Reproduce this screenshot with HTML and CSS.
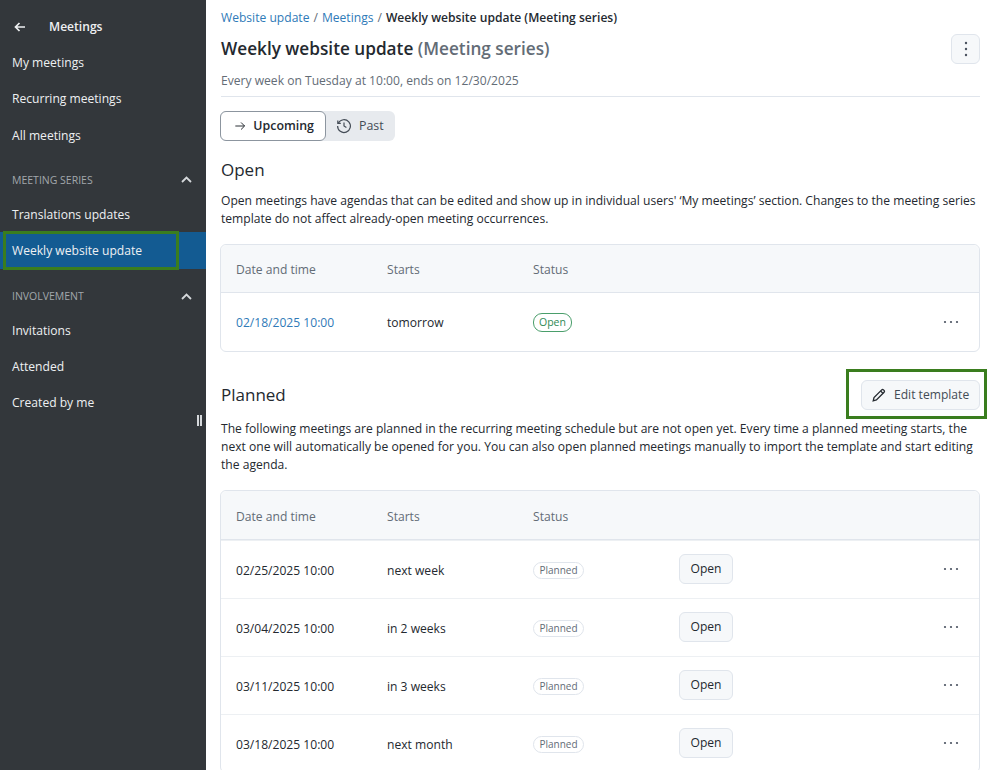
FILE: index.html
```html
<!DOCTYPE html>
<html lang="en">
  <head>
    <meta charset="UTF-8" />
    <title>Weekly website update (Meeting series)</title>
    <link rel="stylesheet" href="styles.css">
  </head>
  <body>
    <aside class="sidebar">
      <div class="sidebar__title">
        <svg class="sidebar__back" width="12" height="12" viewBox="0 0 12 12"><path d="M11 6H2M5.5 2 1.5 6l4 4" fill="none" stroke="currentColor" stroke-width="1.7"/></svg>
        <span>Meetings</span>
      </div>
      <a class="sidebar__item">My meetings</a>
      <a class="sidebar__item">Recurring meetings</a>
      <a class="sidebar__item">All meetings</a>

      <div class="sidebar__group">
        <span>MEETING SERIES</span>
        <svg width="11" height="7" viewBox="0 0 11 7"><path d="M1 6 5.5 1.5 10 6" fill="none" stroke="currentColor" stroke-width="1.8"/></svg>
      </div>
      <a class="sidebar__item">Translations updates</a>
      <a class="sidebar__item sidebar__item--active">Weekly website update<span class="highlight highlight--nav"></span></a>

      <div class="sidebar__group sidebar__group--second">
        <span>INVOLVEMENT</span>
        <svg width="11" height="7" viewBox="0 0 11 7"><path d="M1 6 5.5 1.5 10 6" fill="none" stroke="currentColor" stroke-width="1.8"/></svg>
      </div>
      <a class="sidebar__item">Invitations</a>
      <a class="sidebar__item">Attended</a>
      <a class="sidebar__item">Created by me</a>
      <span class="sidebar__handle"></span>
    </aside>

    <main class="content">
      <nav class="breadcrumb">
        <a>Website update</a><span class="breadcrumb__sep">/</span><a>Meetings</a><span class="breadcrumb__sep">/</span><strong>Weekly website update (Meeting series)</strong>
      </nav>

      <header class="page-head">
        <h1>Weekly website update <span>(Meeting series)</span></h1>
        <button class="btn-kebab">
          <svg width="4" height="16" viewBox="0 0 4 16"><circle cx="2" cy="2" r="1.2"/><circle cx="2" cy="8" r="1.2"/><circle cx="2" cy="14" r="1.2"/></svg>
        </button>
      </header>
      <p class="page-sub">Every week on Tuesday at 10:00, ends on 12/30/2025</p>

      <div class="tabs">
        <button class="tab tab--selected">
          <svg width="14" height="12" viewBox="0 0 14 12"><path d="M1.5 6h10.5M8 2l4 4-4 4" fill="none" stroke="currentColor" stroke-width="1.1"/></svg>
          Upcoming
        </button>
        <button class="tab">
          <svg width="16" height="16" viewBox="0 0 16 16" fill="none" stroke="currentColor" stroke-width="1.2"><path d="M2.3 5.2A6.4 6.4 0 1 1 1.6 8"/><path d="M1.8 2.4v3h3"/><path d="M8 4.6V8l2.4 1.5"/></svg>
          Past
        </button>
      </div>

      <h2 class="section-title section-title--open">Open</h2>
      <p class="section-text">Open meetings have agendas that can be edited and show up in individual users' ‘My meetings’ section. Changes to the meeting series template do not affect already-open meeting occurrences.</p>

      <section class="table table--open">
        <div class="table__row table__row--head">
          <span>Date and time</span><span>Starts</span><span>Status</span>
        </div>
        <div class="table__row table__row--first">
          <a class="table__cell table__link">02/18/2025 10:00</a><span class="table__cell">tomorrow</span><span class="table__tag"><span class="badge badge--open">Open</span></span><span></span>
          <svg class="table__more" width="16" height="4" viewBox="0 0 16 4"><circle cx="2" cy="2" r="1.1"/><circle cx="8" cy="2" r="1.1"/><circle cx="14" cy="2" r="1.1"/></svg>
        </div>
      </section>

      <div class="section-head">
        <h2 class="section-title">Planned</h2>
        <div class="edit-wrap">
          <button class="btn btn--edit">
            <svg width="14" height="14" viewBox="0 0 14 14" fill="none" stroke="#24292f" stroke-width="1.3"><path d="M1.2 12.8 2 9.6 9.7 1.9a1.3 1.3 0 0 1 1.8 0l.6.6a1.3 1.3 0 0 1 0 1.8L4.4 12z"/><path d="M8.6 3l2.4 2.4"/></svg>
            Edit template
          </button>
          <span class="highlight highlight--edit"></span>
        </div>
      </div>
      <p class="section-text">The following meetings are planned in the recurring meeting schedule but are not open yet. Every time a planned meeting starts, the next one will automatically be opened for you. You can also open planned meetings manually to import the template and start editing the agenda.</p>

      <section class="table table--planned">
        <div class="table__row table__row--head table__row--head-tall">
          <span>Date and time</span><span>Starts</span><span>Status</span>
        </div>
        <div class="table__row">
          <span class="table__cell">02/25/2025 10:00</span><span class="table__cell">next week</span><span class="table__tag"><span class="badge">Planned</span></span><span><button class="btn">Open</button></span>
          <svg class="table__more" width="16" height="4" viewBox="0 0 16 4"><circle cx="2" cy="2" r="1.1"/><circle cx="8" cy="2" r="1.1"/><circle cx="14" cy="2" r="1.1"/></svg>
        </div>
        <div class="table__row">
          <span class="table__cell">03/04/2025 10:00</span><span class="table__cell">in 2 weeks</span><span class="table__tag"><span class="badge">Planned</span></span><span><button class="btn">Open</button></span>
          <svg class="table__more" width="16" height="4" viewBox="0 0 16 4"><circle cx="2" cy="2" r="1.1"/><circle cx="8" cy="2" r="1.1"/><circle cx="14" cy="2" r="1.1"/></svg>
        </div>
        <div class="table__row">
          <span class="table__cell">03/11/2025 10:00</span><span class="table__cell">in 3 weeks</span><span class="table__tag"><span class="badge">Planned</span></span><span><button class="btn">Open</button></span>
          <svg class="table__more" width="16" height="4" viewBox="0 0 16 4"><circle cx="2" cy="2" r="1.1"/><circle cx="8" cy="2" r="1.1"/><circle cx="14" cy="2" r="1.1"/></svg>
        </div>
        <div class="table__row">
          <span class="table__cell">03/18/2025 10:00</span><span class="table__cell">next month</span><span class="table__tag"><span class="badge">Planned</span></span><span><button class="btn">Open</button></span>
          <svg class="table__more" width="16" height="4" viewBox="0 0 16 4"><circle cx="2" cy="2" r="1.1"/><circle cx="8" cy="2" r="1.1"/><circle cx="14" cy="2" r="1.1"/></svg>
        </div>
      </section>
    </main>
  </body>
</html>
```

FILE: styles.css
```css
/* Global styles */
* {
  padding: 0;
  margin: 0;
  box-sizing: border-box;
}

:root {
  --sidebarColor: #33373b;
  --activeColor: #135b92;
  --linkColor: #2f7ab8;
  --textColor: #24292f;
  --mutedColor: #636c76;
  --borderColor: #e0e5ec;
  --surfaceColor: #f6f8fa;
  --highlightColor: #3a7d1e;
}

html,
body {
  height: 770px;
  overflow: hidden;
}

body {
  display: flex;
  background: #fff;
  color: var(--textColor);
  font-family: "Open Sans", "Noto Sans", sans-serif;
  font-size: 12.1px;
  line-height: 18px;
}

button {
  font: inherit;
  color: inherit;
}

/* Sidebar */
.sidebar {
  position: relative;
  flex: 0 0 206px;
  height: 770px;
  background: var(--sidebarColor);
  color: #eef0f2;
}

.sidebar__title {
  display: flex;
  align-items: center;
  height: 35px;
  margin-top: 9.5px;
  padding-left: 14px;
  font-weight: 600;
}

.sidebar__title span {
  margin-left: 23px;
}

.sidebar__item {
  position: relative;
  display: flex;
  align-items: center;
  height: 36.5px;
  padding-left: 12px;
}

.sidebar__group + .sidebar__item {
  height: 34.5px;
}

.sidebar__item--active {
  height: 37px;
  background: var(--activeColor);
}

.sidebar__group {
  display: flex;
  justify-content: space-between;
  align-items: center;
  height: 26px;
  margin-top: 12.5px;
  margin-bottom: 5px;
  padding: 0 14px 0 12px;
  color: #a2a7ac;
  font-size: 10.5px;
}

.sidebar__group svg {
  color: #d5d8db;
}

.sidebar__group--second {
  margin-top: 14px;
}

.sidebar__handle {
  position: absolute;
  top: 415px;
  left: 197px;
  width: 5px;
  height: 11px;
  border-left: 2px solid #d5d8db;
  border-right: 2px solid #d5d8db;
}

.highlight {
  position: absolute;
  border: 3px solid var(--highlightColor);
  pointer-events: none;
}

.highlight--nav {
  top: -1px;
  left: 3px;
  width: 176px;
  height: 39px;
}

.highlight--edit {
  top: -11px;
  left: -15px;
  width: 141px;
  height: 50px;
}

/* Main column */
.content {
  flex: 1;
  padding: 9px 10px 0 15px;
  min-width: 0;
}

.breadcrumb {
  height: 18px;
}

.breadcrumb a {
  color: var(--linkColor);
}

.breadcrumb strong {
  font-weight: 600;
}

.breadcrumb__sep {
  margin: 0 4px;
  color: var(--mutedColor);
}

.page-head {
  display: flex;
  justify-content: space-between;
  align-items: center;
  height: 30px;
  margin-top: 7px;
}

.page-head h1 {
  font-size: 17.2px;
  font-weight: 600;
}

.page-head h1 span {
  color: var(--mutedColor);
}

.btn-kebab {
  display: flex;
  justify-content: center;
  align-items: center;
  width: 29px;
  height: 30px;
  background: var(--surfaceColor);
  border: 1px solid var(--borderColor);
  border-radius: 6px;
  fill: #4a5260;
}

.page-sub {
  margin-top: 8px;
  padding-bottom: 6px;
  border-bottom: 1px solid var(--borderColor);
  color: var(--mutedColor);
}

.tabs {
  display: inline-flex;
  margin: 14px 0 0 -1px;
  background: #e7eaee;
  border-radius: 6px;
  font-size: 12.4px;
}

.tab {
  display: flex;
  align-items: center;
  gap: 7px;
  height: 30px;
  padding: 0 11px 0 10px;
  background: none;
  border: 0;
  color: #444c56;
}

.tab--selected {
  width: 106px;
  padding-left: 13px;
  background: #fff;
  border: 1px solid #8c959f;
  border-radius: 6px;
  color: var(--textColor);
  font-weight: 600;
}

.section-title {
  font-size: 17px;
  line-height: 24px;
  font-weight: 400;
}

.section-title--open {
  margin-top: 17px;
}

.section-text {
  margin-top: 10px;
}

/* Tables */
.table {
  margin: 16px 0 0 -1px;
  border: 1px solid var(--borderColor);
  border-radius: 6px;
}

.table__row {
  display: grid;
  grid-template-columns: 151px 146px 146px 1fr 36px;
  align-items: center;
  height: 58px;
  padding-left: 15px;
  border-top: 1px solid #edf0f3;
}

.table__row--head {
  height: 48px;
  padding-top: 3px;
  background: var(--surfaceColor);
  border-top: 0;
  border-bottom: 1px solid var(--borderColor);
  border-radius: 6px 6px 0 0;
  color: var(--mutedColor);
}

.table__row--head-tall {
  height: 49px;
}

.table__row--first {
  border-top: 0;
}

.table__cell {
  padding-top: 2px;
}

.table__link {
  color: var(--linkColor);
}

.table__tag {
  margin-top: 1px;
}

.table__more {
  margin-top: -2px;
  fill: #4a5260;
}

.table__row--first .table__more {
  margin-top: -1px;
}

.badge {
  display: inline-block;
  padding: 0 5.5px;
  border: 1px solid var(--borderColor);
  border-radius: 9px;
  color: var(--mutedColor);
  font-size: 10px;
  line-height: 15px;
}

.badge--open {
  padding: 0 5px;
  border-color: #4a9e6b;
  color: #2f8a55;
  font-size: 10.5px;
  font-weight: 500;
  line-height: 17px;
}

.btn {
  height: 30px;
  width: 54px;
  margin-top: -2px;
  background: var(--surfaceColor);
  border: 1px solid var(--borderColor);
  border-radius: 6px;
}

.section-head {
  display: flex;
  justify-content: space-between;
  align-items: center;
  margin-top: 28px;
  margin-bottom: 1px;
}

.edit-wrap {
  position: relative;
}

.btn--edit {
  display: flex;
  align-items: center;
  gap: 8px;
  width: 119px;
  margin-top: 0;
  padding-left: 10px;
  color: #444c56;
}
```
